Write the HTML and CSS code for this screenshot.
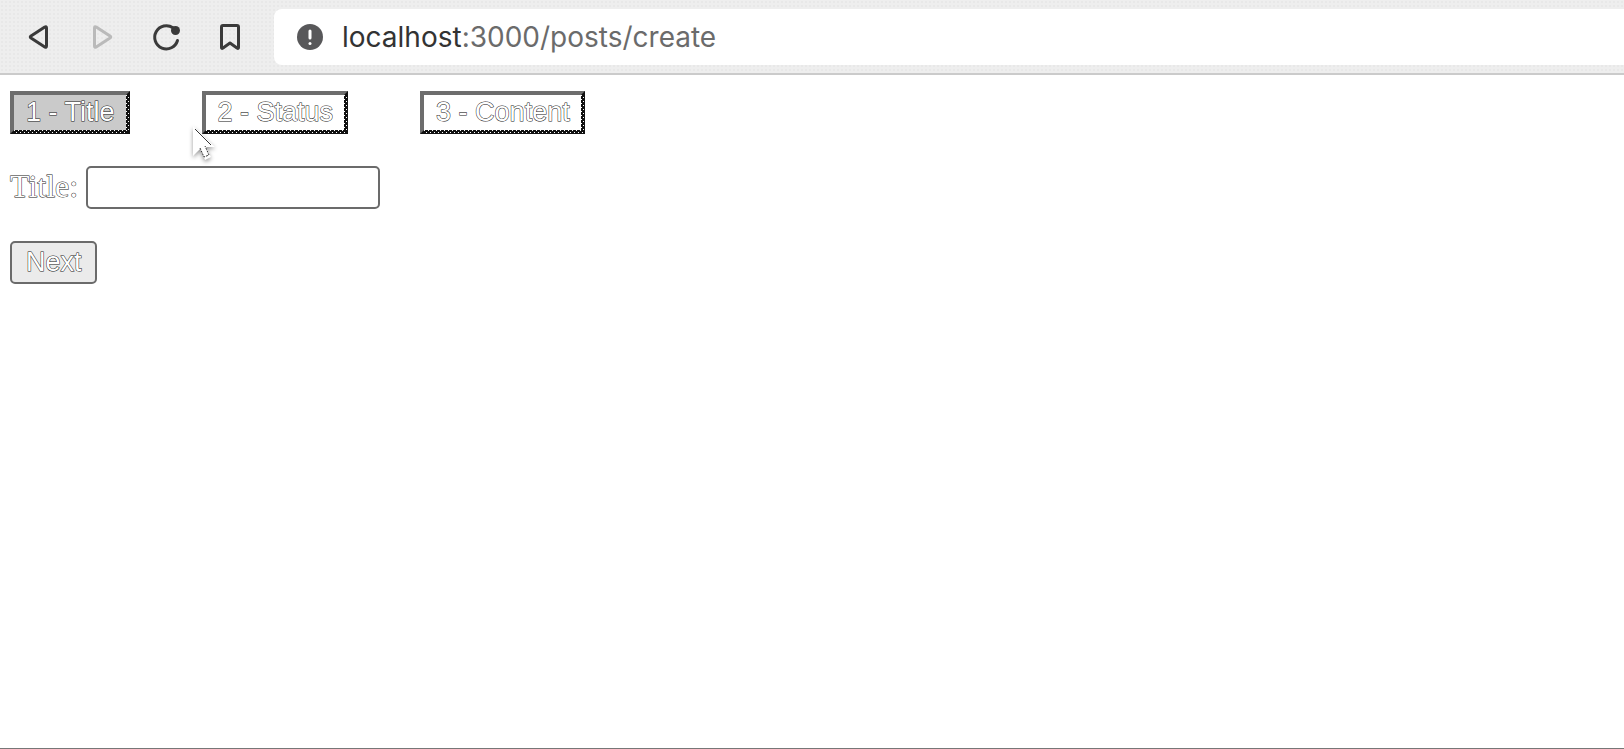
FILE: index.html
```html
<!DOCTYPE html>
<html lang="en">
<head>
<meta charset="utf-8">
<title>Create post</title>
<link rel="stylesheet" href="styles.css">
</head>
<body>
<header class="toolbar">
  <nav class="nav">
    <button class="icon" aria-label="Back"><svg viewBox="0 0 32 32"><path d="M24.500 7v18q0 2-1.700 1L9 17q-1.500-1 0-2L22.800 6Q24.500 5 24.500 7z"/></svg></button>
    <button class="icon dim" aria-label="Forward" disabled><svg viewBox="0 0 32 32"><path d="M8.500 7v18q0 2 1.700 1L24 17q1.500-1 0-2L10.200 6Q8.500 5 8.500 7z"/></svg></button>
    <button class="icon" aria-label="Reload"><svg viewBox="0 0 32 32"><path d="M27.500 19.500A11.600 11.600 0 1 1 23 6.800"/><circle class="solid" cx="25.500" cy="9.500" r="4.500"/></svg></button>
    <button class="icon" aria-label="Bookmark"><svg viewBox="0 0 32 32"><path d="M9 4.500h14q1.500 0 1.500 1.500v20.500q0 1.500-1.500.5l-7-5-7 5q-1.500 1-1.500-.5V6q0-1.500 1.500-1.500z"/></svg></button>
  </nav>
  <div class="address">
    <svg class="info" viewBox="0 0 26 26"><circle cx="13" cy="13" r="13"/><path d="M13 7v7"/><path d="M13 19.500v.1"/></svg>
    <span class="url"><span class="host">localhost</span>:3000/posts/create</span>
  </div>
</header>
<main class="page">
  <div class="steps">
    <button class="step active">1 - Title</button>
    <button class="step">2 - Status</button>
    <button class="step">3 - Content</button>
  </div>
  <div class="field">
    <label class="label" for="title">Title:</label>
    <input class="input" id="title" type="text">
  </div>
  <button class="next">Next</button>
</main>
<svg class="cursor" viewBox="0 0 26 40"><path class="body" d="M3 2v30l7-7 5 11 6-3-5-10h9z"/><path class="edge" d="M5 5l16 16"/><path class="tail" d="M10 24l4 9 5-2-4-9"/></svg>
</body>
</html>
```
FILE: styles.css
```css
* { box-sizing: border-box; }
body {
  margin: 0;
  min-height: 100vh;
  display: flex;
  flex-direction: column;
  background: #fff;
  border-bottom: 1px solid #777;
}
.toolbar {
  display: flex;
  align-items: center;
  padding: 9px 0 8px 22px;
  border-bottom: 2px solid #cbcbcb;
  background: radial-gradient(circle at 2px 2px, #e8e8e8 1px, transparent 1px) 0 0 / 4px 4px #eee;
}
.nav { display: flex; gap: 32px; margin-right: 28px; }
.icon { width: 32px; height: 32px; padding: 0; border: 0; background: none; color: #3a3a3a; }
.icon svg { display: block; fill: none; stroke: currentColor; stroke-width: 3; stroke-linecap: round; stroke-linejoin: round; }
.icon .solid { fill: currentColor; stroke: none; }
.icon.dim { color: #bababa; }
.address {
  flex: 1;
  height: 56px;
  display: flex;
  align-items: center;
  gap: 19px;
  padding-left: 23px;
  border-radius: 8px 0 0 8px;
  background: #fff;
}
.info { width: 26px; height: 26px; fill: #58585a; stroke-width: 3; stroke-linecap: round; }
.info path { stroke: #fff; }
.url { font: 28px/36px Inter, sans-serif; color: #6b6b6b; }
.host { color: #333; }
.page {
  flex: 1;
  display: flex;
  flex-direction: column;
  align-items: flex-start;
  gap: 32px;
  padding: 16px 10px;
}
.steps { display: flex; gap: 72px; }
.step, .next, .label {
  color: #fff;
  -webkit-text-stroke: 1px #222;
  paint-order: stroke fill;
}
.step, .next { height: 43px; font: 27px/30px "Liberation Sans", sans-serif; }
.step {
  position: relative;
  padding: 0 11px 2px 12px;
  border: 4px solid;
  border-color: #6d6d6d #111 #111 #6d6d6d;
  background: #fff;
}
.step.active { background: #cacaca; }
.step::before, .step::after {
  content: "";
  position: absolute;
  background:
    conic-gradient(from 270deg at 1px 1px, #fff 25%, transparent 0) 0 0 / 4px 4px,
    conic-gradient(from 270deg at 1px 1px, #fff 25%, transparent 0) 2px 2px / 4px 4px;
}
.step::before { left: 0; right: -2px; bottom: -3px; height: 3px; }
.step::after { top: 0; bottom: 0; right: -3px; width: 3px; }
.field { display: flex; align-items: center; gap: 8px; }
.label { padding-bottom: 4px; font: 32px/36px "Liberation Serif", serif; }
.input {
  width: 294px;
  height: 43px;
  padding: 2px 4px;
  border: 2px solid #6b6b6b;
  border-radius: 5px;
  background: #fff;
  font: 27px "Liberation Sans", sans-serif;
}
.next { padding: 0 13px 2px 14px; border: 2px solid #6b6b6b; border-radius: 5px; background: #ebebeb; }
.cursor {
  position: absolute;
  left: 190px;
  top: 124px;
  width: 26px;
  height: 40px;
  overflow: visible;
  filter: drop-shadow(0 2px 2px #999);
}
.cursor .body { fill: #fff; }
.cursor .edge { fill: none; stroke: #333; }
.cursor .tail { fill: none; stroke: #333; stroke-dasharray: 2 1; }
```
